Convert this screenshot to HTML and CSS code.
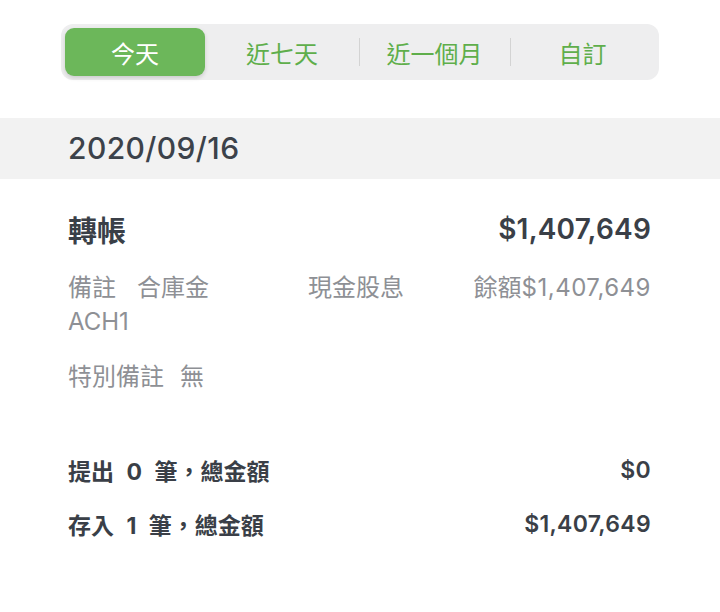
FILE: index.html
```html
<!DOCTYPE html>
<html lang="zh-Hant">
<head>
  <meta charset="UTF-8">
  <meta name="viewport" content="width=device-width, initial-scale=1.0">
  <title>交易明細</title>
  <link rel="stylesheet" href="styles.css">
</head>
<body>
  <div class="container">
    <div class="tabs">
      <div class="tab active">今天</div>
      <div class="tab">近七天</div>
      <div class="tab sep">近一個月</div>
      <div class="tab sep">自訂</div>
    </div>

    <div class="date-bar">2020/09/16</div>

    <div class="record">
      <div class="record-head">
        <span class="record-title">轉帳</span>
        <span class="num">$1,407,649</span>
      </div>
      <div class="record-info">
        <div class="memo">
          <div><span class="label">備註</span><span>合庫金</span></div>
          <div>ACH1</div>
        </div>
        <div class="memo-type">現金股息</div>
        <div class="balance">餘額<span class="num">$1,407,649</span></div>
      </div>
      <div class="record-note"><span class="label">特別備註</span><span>無</span></div>
    </div>

    <div class="summary">
      <div class="summary-row">
        <span class="summary-label">提出 0 筆，總金額</span>
        <span class="num">$0</span>
      </div>
      <div class="summary-row">
        <span class="summary-label">存入 1 筆，總金額</span>
        <span class="num">$1,407,649</span>
      </div>
    </div>
  </div>
</body>
</html>
```

FILE: styles.css
```css
* {
  box-sizing: border-box;
}

body {
  margin: 0;
  font-family: Inter, "Noto Sans CJK TC", sans-serif;
  background-color: #ffffff;
  color: #3a3f47;
}

.container {
  width: 720px;
  min-height: 612px;
  padding-top: 24px;
}

/* segmented control */
.tabs {
  width: 598px;
  height: 56px;
  margin: 0 auto;
  padding: 4px;
  background-color: #eeeeef;
  border-radius: 12px;
  display: grid;
  grid-template-columns: 140px 154px 151px 1fr;
}

.tab {
  position: relative;
  display: flex;
  align-items: center;
  justify-content: center;
  font-size: 24px;
  color: #5fae4b;
}

.tab.sep::before {
  content: "";
  position: absolute;
  left: 0;
  top: 10px;
  bottom: 10px;
  width: 1px;
  background-color: #d3d3d3;
}

.tab.active {
  background-color: #6cb75a;
  color: #ffffff;
  border-radius: 9px;
  box-shadow: 0 2px 4px rgba(0,0,0,0.15);
}

.date-bar {
  margin-top: 38px;
  height: 61px;
  line-height: 61px;
  padding-left: 68px;
  background-color: #f2f2f2;
  font-size: 30px;
  font-weight: 500;
  letter-spacing: 0.4px;
  color: #3c424a;
}

.num {
  font-family: Inter, sans-serif;
}

.record {
  padding: 30px 69px 0 68px;
}

.record-head {
  display: flex;
  justify-content: space-between;
  align-items: center;
  height: 40px;
  font-weight: 700;
}

.record-title {
  font-size: 29px;
}

.record-head .num {
  font-size: 28px;
  font-weight: 600;
  letter-spacing: 0.2px;
}

.record-info {
  margin-top: 22px;
  display: grid;
  grid-template-columns: 190px 1fr auto;
  column-gap: 50px;
  font-size: 24px;
  line-height: 34px;
  color: #8e9095;
}

.balance .num {
  letter-spacing: 0.5px;
}

.label {
  margin-right: 21px;
}

.record-note {
  margin-top: 21px;
  font-size: 24px;
  line-height: 34px;
  color: #8e9095;
}

.record-note .label {
  margin-right: 16px;
}

.summary {
  padding: 59px 69px 0 68px;
  display: flex;
  flex-direction: column;
  gap: 20px;
}

.summary-row {
  display: flex;
  justify-content: space-between;
  align-items: center;
  height: 34px;
  font-size: 23px;
  font-weight: 700;
}

.summary-label {
  word-spacing: 7px;
}

.summary-row .num {
  font-weight: 600;
  letter-spacing: 0.3px;
}
```
